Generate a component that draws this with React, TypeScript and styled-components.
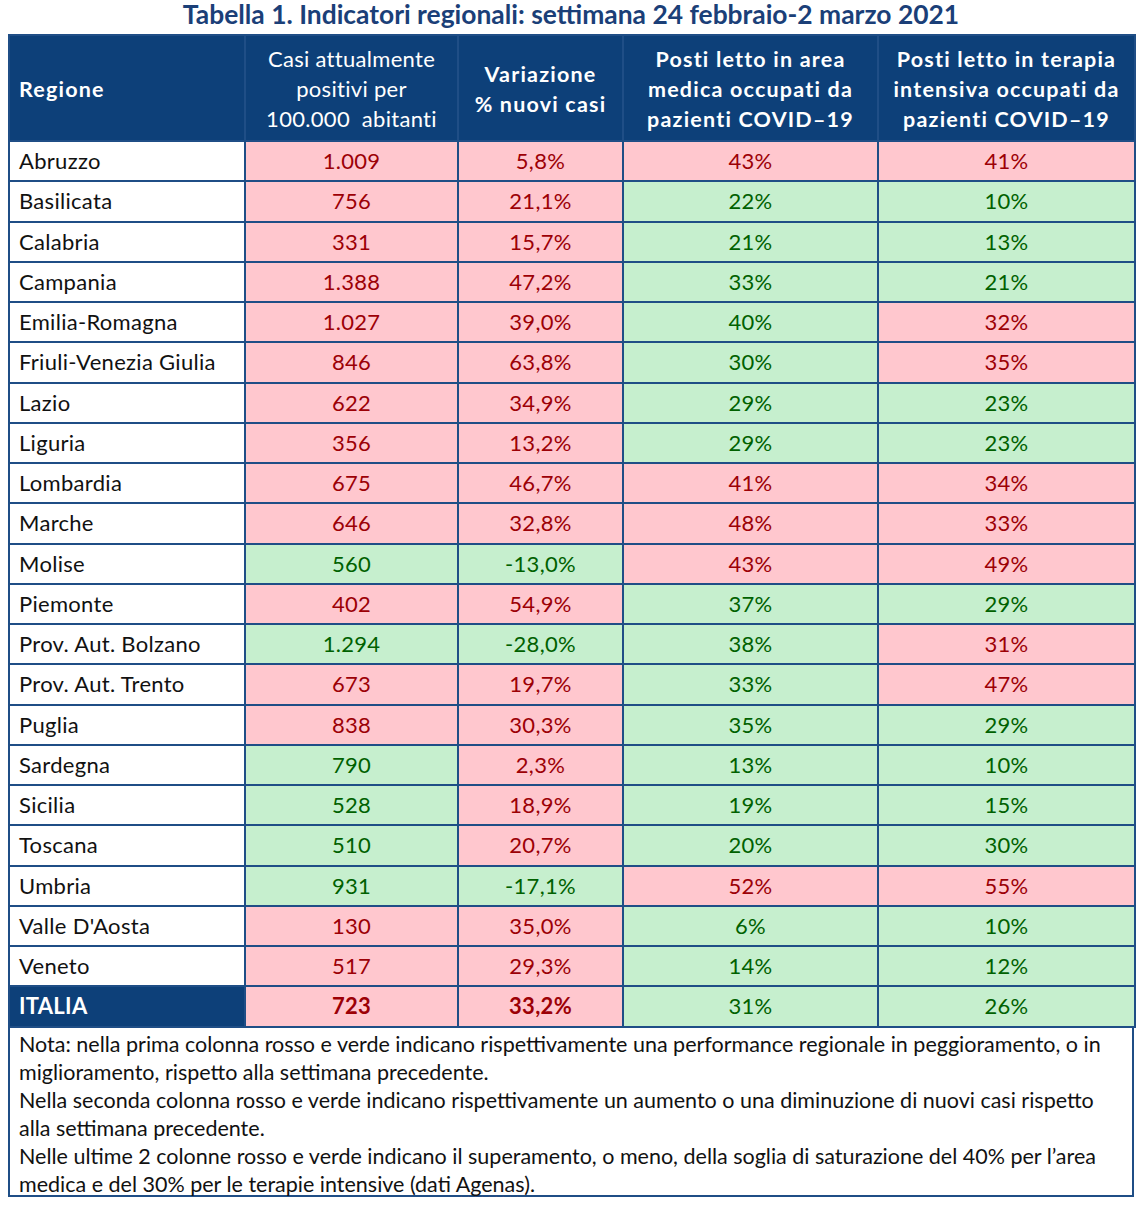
import React from "react";
import styled, { createGlobalStyle } from "styled-components";

const Global = createGlobalStyle`
  html, body { margin: 0; padding: 0; background: #ffffff; }
  body { font-family: Lato, "Open Sans", sans-serif; }
`;

type Tone = "r" | "g";
type Row = { name: string; cells: [string, Tone][] };

const rows: Row[] = [
  { name: "Abruzzo", cells: [["1.009", "r"], ["5,8%", "r"], ["43%", "r"], ["41%", "r"]] },
  { name: "Basilicata", cells: [["756", "r"], ["21,1%", "r"], ["22%", "g"], ["10%", "g"]] },
  { name: "Calabria", cells: [["331", "r"], ["15,7%", "r"], ["21%", "g"], ["13%", "g"]] },
  { name: "Campania", cells: [["1.388", "r"], ["47,2%", "r"], ["33%", "g"], ["21%", "g"]] },
  { name: "Emilia-Romagna", cells: [["1.027", "r"], ["39,0%", "r"], ["40%", "g"], ["32%", "r"]] },
  { name: "Friuli-Venezia Giulia", cells: [["846", "r"], ["63,8%", "r"], ["30%", "g"], ["35%", "r"]] },
  { name: "Lazio", cells: [["622", "r"], ["34,9%", "r"], ["29%", "g"], ["23%", "g"]] },
  { name: "Liguria", cells: [["356", "r"], ["13,2%", "r"], ["29%", "g"], ["23%", "g"]] },
  { name: "Lombardia", cells: [["675", "r"], ["46,7%", "r"], ["41%", "r"], ["34%", "r"]] },
  { name: "Marche", cells: [["646", "r"], ["32,8%", "r"], ["48%", "r"], ["33%", "r"]] },
  { name: "Molise", cells: [["560", "g"], ["-13,0%", "g"], ["43%", "r"], ["49%", "r"]] },
  { name: "Piemonte", cells: [["402", "r"], ["54,9%", "r"], ["37%", "g"], ["29%", "g"]] },
  { name: "Prov. Aut. Bolzano", cells: [["1.294", "g"], ["-28,0%", "g"], ["38%", "g"], ["31%", "r"]] },
  { name: "Prov. Aut. Trento", cells: [["673", "r"], ["19,7%", "r"], ["33%", "g"], ["47%", "r"]] },
  { name: "Puglia", cells: [["838", "r"], ["30,3%", "r"], ["35%", "g"], ["29%", "g"]] },
  { name: "Sardegna", cells: [["790", "g"], ["2,3%", "r"], ["13%", "g"], ["10%", "g"]] },
  { name: "Sicilia", cells: [["528", "g"], ["18,9%", "r"], ["19%", "g"], ["15%", "g"]] },
  { name: "Toscana", cells: [["510", "g"], ["20,7%", "r"], ["20%", "g"], ["30%", "g"]] },
  { name: "Umbria", cells: [["931", "g"], ["-17,1%", "g"], ["52%", "r"], ["55%", "r"]] },
  { name: "Valle D'Aosta", cells: [["130", "r"], ["35,0%", "r"], ["6%", "g"], ["10%", "g"]] },
  { name: "Veneto", cells: [["517", "r"], ["29,3%", "r"], ["14%", "g"], ["12%", "g"]] },
];

const total: Row = {
  name: "ITALIA",
  cells: [["723", "r"], ["33,2%", "r"], ["31%", "g"], ["26%", "g"]],
};

const NAVY = "#0d4079";
const LINE = "#1f4e86";

const Page = styled.div`
  width: 1142px;
  padding: 0 8px;
  box-sizing: border-box;
`;

const Title = styled.h1`
  margin: 0;
  height: 34px;
  padding-bottom: 6px;
  box-sizing: border-box;
  display: flex;
  align-items: center;
  justify-content: center;
  font-family: Lato, sans-serif;
  font-weight: 700;
  font-size: 26.4px;
  color: #1b3f78;
  white-space: nowrap;
`;

const Table = styled.table`
  width: 1126px;
  border-collapse: collapse;
  table-layout: fixed;
  border: 2px solid ${LINE};
`;

const HeadCell = styled.th<{ $align?: "left" | "center"; $light?: boolean }>`
  background: ${NAVY};
  color: #ffffff;
  font-family: Lato, sans-serif;
  font-weight: ${(p) => (p.$light ? 400 : 700)};
  font-size: ${(p) => (p.$light ? "22px" : "21.5px")};
  letter-spacing: ${(p) => (p.$light ? "0.3px" : "1.2px")};
  line-height: 30px;
  height: 103px;
  padding: 1px 4px 0;
  white-space: nowrap;
  text-align: ${(p) => p.$align || "center"};
  border: 2px solid ${LINE};
  border-left-color: #e8edf5;
  vertical-align: middle;
  &:first-child {
    border-left-color: ${LINE};
    padding-left: 9px;
  }
`;

const NameCell = styled.td<{ $total?: boolean }>`
  height: 38.25px;
  padding: 0 0 0 9px;
  font-family: Lato, sans-serif;
  font-size: 22px;
  letter-spacing: 0.3px;
  font-weight: ${(p) => (p.$total ? 700 : 400)};
  color: ${(p) => (p.$total ? "#ffffff" : "#111111")};
  background: ${(p) => (p.$total ? NAVY : "#ffffff")};
  border: 2px solid ${LINE};
  white-space: nowrap;
  line-height: 36px;
`;

const ValueCell = styled.td<{ $tone: Tone; $bold?: boolean }>`
  height: 38.25px;
  padding: 0;
  text-align: center;
  font-family: Lato, sans-serif;
  font-size: 22px;
  letter-spacing: 0.3px;
  line-height: 36px;
  font-weight: ${(p) => (p.$bold ? 700 : 400)};
  background: ${(p) => (p.$tone === "r" ? "#ffc7ce" : "#c6efce")};
  color: ${(p) => (p.$tone === "r" ? "#9c0006" : "#006100")};
  border: 2px solid ${LINE};
`;

const Notes = styled.div`
  width: 1126px;
  box-sizing: border-box;
  border: 2px solid ${LINE};
  border-top: none;
  padding: 2px 0 0 9px;
  height: 169px;
  font-family: Lato, sans-serif;
  font-size: 21.5px;
  line-height: 28px;
  color: #111111;
`;

const NoteLine = styled.div`
  white-space: nowrap;
`;

const Spell = styled.span`
  text-decoration-line: underline;
  text-decoration-style: wavy;
  text-decoration-color: #e03030;
  text-decoration-thickness: 1px;
  text-underline-offset: 4px;
`;

export default function App() {
  return (
    <Page>
      <Global />
      <Title>Tabella 1. Indicatori regionali: settimana 24 febbraio-2 marzo 2021</Title>
      <Table>
        <colgroup>
          <col style={{ width: 236 }} />
          <col style={{ width: 213 }} />
          <col style={{ width: 165 }} />
          <col style={{ width: 255 }} />
          <col style={{ width: 257 }} />
        </colgroup>
        <thead>
          <tr>
            <HeadCell $align="left">Regione</HeadCell>
            <HeadCell $light>
              Casi attualmente
              <br />
              positivi per
              <br />
              100.000&nbsp; abitanti
            </HeadCell>
            <HeadCell>
              Variazione
              <br />% nuovi casi
            </HeadCell>
            <HeadCell>
              Posti letto in area
              <br />
              medica occupati da
              <br />
              pazienti COVID–19
            </HeadCell>
            <HeadCell>
              Posti letto in terapia
              <br />
              intensiva occupati da
              <br />
              pazienti COVID–19
            </HeadCell>
          </tr>
        </thead>
        <tbody>
          {rows.map((r) => (
            <tr key={r.name}>
              <NameCell>{r.name}</NameCell>
              {r.cells.map(([v, t], i) => (
                <ValueCell key={i} $tone={t}>
                  {v}
                </ValueCell>
              ))}
            </tr>
          ))}
          <tr>
            <NameCell $total>{total.name}</NameCell>
            {total.cells.map(([v, t], i) => (
              <ValueCell key={i} $tone={t} $bold={i < 2}>
                {v}
              </ValueCell>
            ))}
          </tr>
        </tbody>
      </Table>
      <Notes>
        <NoteLine>
          Nota: nella prima colonna rosso e verde indicano rispettivamente una performance regionale in peggioramento, o in
        </NoteLine>
        <NoteLine>miglioramento, rispetto alla settimana precedente.</NoteLine>
        <NoteLine>
          Nella seconda colonna rosso e verde indicano rispettivamente un aumento o una diminuzione di nuovi casi rispetto
        </NoteLine>
        <NoteLine>alla settimana precedente.</NoteLine>
        <NoteLine>
          Nelle ultime 2 colonne rosso e verde indicano il superamento, o meno, della soglia di saturazione del 40% per l’area
        </NoteLine>
        <NoteLine>
          medica e del 30% per le terapie intensive (dati <Spell>Agenas</Spell>).
        </NoteLine>
      </Notes>
    </Page>
  );
}
